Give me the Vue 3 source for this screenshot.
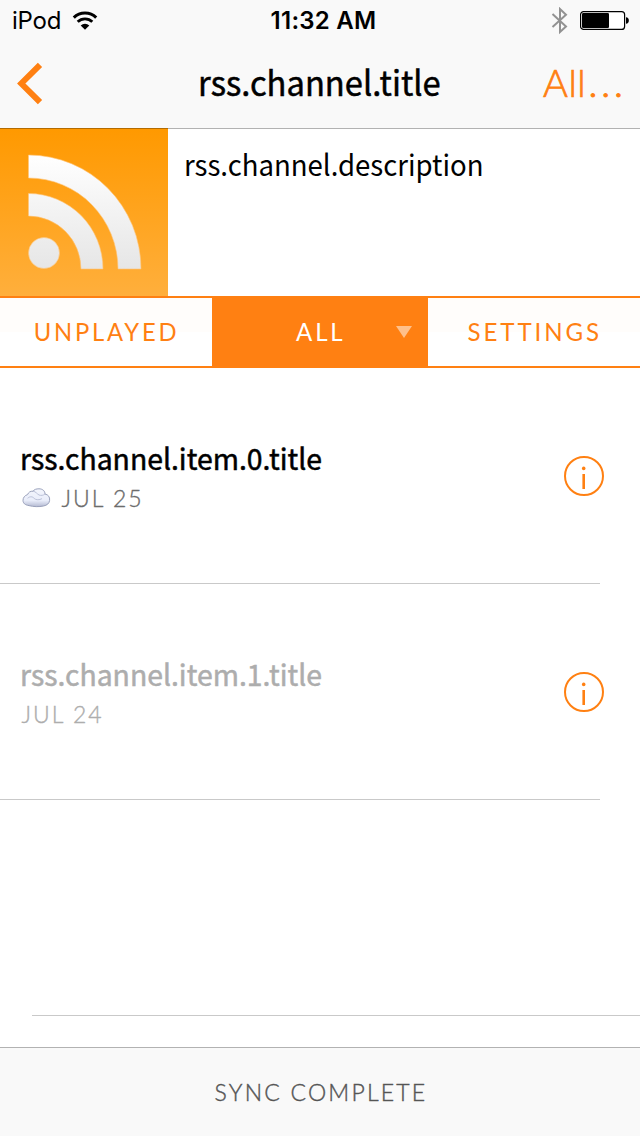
<script setup>
const items = [
  { title: 'rss.channel.item.0.title', date: 'JUL 25', cloud: true, played: false },
  { title: 'rss.channel.item.1.title', date: 'JUL 24', cloud: false, played: true },
]
</script>

<template>
  <div class="screen">
    <header class="top">
      <div class="status">
        <div class="carrier">
          <span class="ipod">iPod</span>
          <svg width="26" height="20" viewBox="0 0 26 20" fill="none" stroke="#000">
            <path d="M1.8 6.6A15.8 15.8 0 0 1 24.2 6.6" stroke-width="3" />
            <path d="M5.7 10.8A10.4 10.4 0 0 1 20.3 10.8" stroke-width="2.8" />
            <path d="M13 18.8L8.7 14.4A6.2 6.2 0 0 1 17.3 14.4Z" fill="#000" stroke="none" />
          </svg>
        </div>
        <span class="clock">11:32 AM</span>
        <div class="power">
          <svg width="17" height="28" viewBox="0 0 17 28" fill="none" stroke="#929292" stroke-width="2">
            <path d="M1.5 7L15 19.5L9 25V2L15 7.7L1.5 20" />
          </svg>
          <svg class="battery" width="50" height="20" viewBox="0 0 50 20">
            <rect x="0.6" y="0.6" width="44" height="17.8" rx="3" fill="#fff" stroke="#000" stroke-width="1.2" />
            <rect x="2" y="2" width="27" height="15" rx="1.2" />
            <path d="M46 6.2C49.8 6.2 49.8 12.8 46 12.8Z" />
          </svg>
        </div>
      </div>
      <nav class="nav">
        <svg class="back" width="28" height="44" viewBox="0 0 28 44" fill="none" stroke="#ff8012" stroke-width="6">
          <path d="M24 2.8L5.3 21.5L24 40.2" />
        </svg>
        <h1><span>rss.channel.title</span></h1>
        <span class="all">All<span class="dots">...</span></span>
      </nav>
    </header>

    <section class="channel">
      <svg class="cover" width="168" height="168" viewBox="0 0 168 168">
        <defs>
          <linearGradient id="sky" x1="0" y1="0" x2="0" y2="1">
            <stop offset="0" stop-color="#ff9900" />
            <stop offset="1" stop-color="#ffaf3c" />
          </linearGradient>
          <linearGradient id="wave" gradientUnits="userSpaceOnUse" x1="0" y1="27" x2="0" y2="141">
            <stop offset="0" stop-color="#fff" />
            <stop offset="1" stop-color="#e6e6e6" />
          </linearGradient>
        </defs>
        <rect width="168" height="168" fill="url(#sky)" />
        <rect width="168" height="1" fill="#b36b00" />
        <g fill="url(#wave)" stroke="#ffc579" stroke-width=".6">
          <path d="M28.5 27A112.5 114 0 0 1 141 141H118A89.5 91 0 0 0 28.5 50Z" />
          <path d="M28.5 65.5A74.5 75.5 0 0 1 103 141H81A52.5 53 0 0 0 28.5 88Z" />
          <circle cx="44" cy="125" r="15.5" />
        </g>
      </svg>
      <p><span>rss.channel.description</span></p>
    </section>

    <div class="tabs">
      <div class="tab first"><span class="t1">UNPLAYED</span></div>
      <div class="tab on">
        <span class="t2">ALL</span>
        <svg class="caret" width="16" height="12" viewBox="0 0 16 12"><path d="M0 0H16L8 12Z" fill="#ffc08a" /></svg>
      </div>
      <div class="tab last"><span class="t3">SETTINGS</span></div>
    </div>

    <main>
      <article v-for="item in items" :key="item.title" :class="{ played: item.played }">
        <div class="text">
          <h2><span>{{ item.title }}</span></h2>
          <div class="meta">
            <svg v-if="item.cloud" class="cloud" width="30" height="20" viewBox="0 0 30 20">
              <defs>
                <linearGradient id="puff" x1="0" y1="0" x2="0" y2="1">
                  <stop offset="0" stop-color="#f4f6fd" />
                  <stop offset=".65" stop-color="#e9edfa" />
                  <stop offset="1" stop-color="#b4bad2" />
                </linearGradient>
              </defs>
              <path d="M7 17.6C3 17 1 15.2 1 12.4C1 9.6 2.8 7.4 5.6 6.6C6.4 4.2 8.5 3 11 3.2C12.2 1.4 14.3 .8 17 .8C20.4 .8 23 2.8 23 6C26.4 6.8 28 9 27.6 12.4C27.2 15.6 25 17.3 21.5 18C17 19 11.3 18.8 7 17.6Z" fill="url(#puff)" stroke="#9aa1bb" stroke-width="1" />
              <path d="M11 3.2C14 3.6 15 6 17 7C19 7.8 21.5 7.4 23 6M5.6 10.2C8 8.2 10.5 8.4 12.2 10.4C14 12.2 17.5 12.2 20 10.6" fill="none" stroke="#bcc2d9" stroke-width="1" />
            </svg>
            <span>{{ item.date }}</span>
          </div>
        </div>
        <svg class="info" width="40" height="40" viewBox="0 0 40 40">
          <circle cx="20" cy="20" r="19" fill="none" stroke="#ff8012" stroke-width="2" />
          <circle cx="19.7" cy="12.4" r="1.8" fill="#ff8012" />
          <path d="M19.7 18V33" stroke="#ff8012" stroke-width="2.6" />
        </svg>
      </article>
      <div class="blank"></div>
    </main>

    <footer><span>SYNC COMPLETE</span></footer>
  </div>
</template>

<style>
body { margin: 0; background: #fff; }
</style>

<style scoped>
.screen { width: 640px; height: 1136px; display: flex; flex-direction: column; background: #fff; overflow: hidden; font-family: "Noto Sans CJK SC", "Noto Sans", sans-serif; color: #000; }
span { white-space: nowrap; display: inline-block; }
h1, h2, p { margin: 0; font-weight: 400; }
.top { height: 129px; box-sizing: border-box; background: #f9f9f9; border-bottom: 1px solid #b2b2b2; }
.status { height: 40px; display: grid; grid-template-columns: 1fr auto 1fr; align-items: center; font-family: Inter, sans-serif; font-size: 24px; line-height: 42px; }
.carrier { display: flex; align-items: center; padding-left: 12px; gap: 11px; }
.carrier svg { margin-top: -1px; }
.ipod { letter-spacing: -.2px; }
.clock { font-weight: 600; letter-spacing: .25px; margin-left: 7px; }
.power { display: flex; justify-content: flex-end; align-items: center; gap: 12px; padding-right: 10px; }
.nav { height: 88px; display: grid; grid-template-columns: 180px 1fr 180px; align-items: center; }
.back { margin-left: 16px; }
h1 { text-align: center; font-size: 34px; line-height: 84px; margin-top: -4px; -webkit-text-stroke: .5px #000; }
h1 span { transform: translateX(-.7px) scaleX(.962); }
.all { font-family: Lato, sans-serif; font-weight: 300; -webkit-text-stroke: .7px #ff8012; font-size: 38px; line-height: 80px; margin-top: -4px; color: #ff8012; justify-self: end; margin-right: 13px; letter-spacing: .6px; }
.dots { letter-spacing: 4px; margin-left: 2px; -webkit-text-stroke: 1px #ff8012; }
.channel { height: 167px; display: flex; }
.cover { margin-top: -1px; flex: none; }
.channel p { padding: 12px 0 0 16px; font-size: 29px; line-height: 44px; }
.channel p span { transform: scaleX(.95); transform-origin: 0 0; }
.tabs { height: 72px; box-sizing: border-box; display: grid; grid-template-columns: 212px 216px 212px; border-top: 2px solid #ff8012; border-bottom: 2px solid #ff8012; font-family: Lato, sans-serif; font-size: 25px; line-height: 68px; letter-spacing: 3px; color: #ff8012; }
.tab { text-align: center; background: linear-gradient(#fffdfb 50%, #fff 50%); }
.t1 { transform: translate(.8px, -1px) scaleX(.95); }
.t3 { transform: translate(1px, -1px) scaleX(.963); }
.tab.on { background: #ff8012; color: #fff; display: grid; grid-template-columns: 1fr auto 1fr; align-items: center; }
.on .t2 { grid-column: 2; transform: translate(1px, -1px) scaleX(.96); }
.caret { justify-self: end; margin-right: 16px; }
main { flex: 1; }
article { height: 216px; width: 600px; box-sizing: border-box; border-bottom: 1px solid #c9c9c9; display: flex; justify-content: space-between; align-items: center; padding-left: 20px; }
h2 { font-size: 29px; line-height: 44px; margin: -1px 0 1px; -webkit-text-stroke: .5px currentColor; }
h2 span { transform: scaleX(.978); transform-origin: 0 0; }
.meta { display: flex; align-items: center; gap: 10px; height: 36px; padding-left: 1.5px; font-family: Lato, sans-serif; font-weight: 300; -webkit-text-stroke: .35px currentColor; font-size: 23px; letter-spacing: 2px; color: #6c6c6c; }
.played h2, .played .meta { color: #adadad; }
.info { margin-right: -4px; flex: none; }
.blank { height: 216px; margin-left: 32px; box-sizing: border-box; border-bottom: 1px solid #c9c9c9; }
footer { height: 89px; box-sizing: border-box; border-top: 1px solid #b2b2b2; background: #f9f9f9; text-align: center; font-family: Lato, sans-serif; font-weight: 300; -webkit-text-stroke: .4px #555; font-size: 23px; line-height: 88px; letter-spacing: 2.2px; color: #555; }
footer span { transform: translateX(1px); }
</style>
